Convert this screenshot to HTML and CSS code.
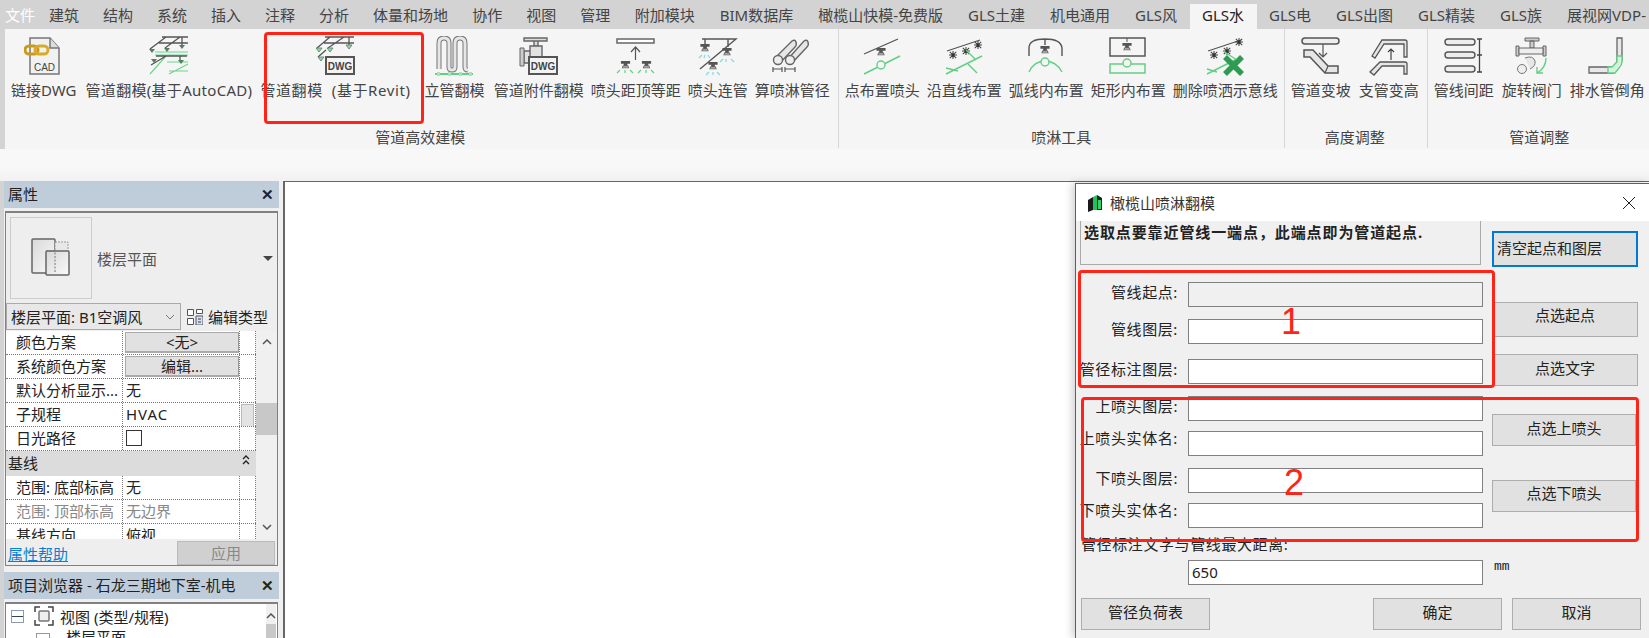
FILE: index.html
```html
<!DOCTYPE html>
<html lang="zh-CN">
<head>
  <meta charset="UTF-8">
  <title>GLS水 - 橄榄山喷淋翻模</title>
  <link rel="stylesheet" href="styles.css">
</head>
<body>
  <svg class="defs" width="0" height="0">
    <symbol id="head" viewBox="0 0 12 12">
      <path d="M1 1h10v3H8v2h1l1 3H2l1-3h1V4H1z" fill="#555"/>
      <path d="M3.500 7h5M3 8.500h6" stroke="#ddd" stroke-width=".7"/>
    </symbol>
    <symbol id="star" viewBox="0 0 10 10">
      <path d="M1 1l8 8M9 1L1 9M5 0v10M0 5h10" stroke="#444" stroke-width="1.300"/>
      <circle cx="5" cy="5" r="1.800" fill="#333"/>
    </symbol>
  </svg>

  <div class="tabs">
    <div class="tab tab-file">文件</div>
    <div class="tab">建筑</div>
    <div class="tab">结构</div>
    <div class="tab">系统</div>
    <div class="tab">插入</div>
    <div class="tab">注释</div>
    <div class="tab">分析</div>
    <div class="tab">体量和场地</div>
    <div class="tab">协作</div>
    <div class="tab">视图</div>
    <div class="tab">管理</div>
    <div class="tab wide">附加模块</div>
    <div class="tab wide">BIM数据库</div>
    <div class="tab wide">橄榄山快模-免费版</div>
    <div class="tab wide">GLS土建</div>
    <div class="tab wide">机电通用</div>
    <div class="tab wide">GLS风</div>
    <div class="tab wide active">GLS水</div>
    <div class="tab wide">GLS电</div>
    <div class="tab wide">GLS出图</div>
    <div class="tab wide">GLS精装</div>
    <div class="tab wide">GLS族</div>
    <div class="tab wide">展视网VDP-</div>
  </div>

  <div class="ribbon">
    <div class="group group-pad">
      <div class="tools">
        <div class="tool tool-first">
          <svg class="icon" viewBox="0 0 40 40">
            <path d="M6 2h20l9 10v26H6z" fill="#f1f1f1" stroke="#777" stroke-width="1.500"/>
            <path d="M26 2v10h9" fill="#ddd" stroke="#777" stroke-width="1.500"/>
            <rect x="1" y="10" width="13" height="8" rx="4" fill="none" stroke="#c99a1c" stroke-width="3"/>
            <rect x="11" y="10" width="13" height="8" rx="4" fill="none" stroke="#d8ab2a" stroke-width="3"/>
            <text x="20.500" y="35" class="icon-text cad">CAD</text>
          </svg>
          <div class="tool-label">链接DWG</div>
        </div>
        <div class="tool">
          <svg class="icon" viewBox="0 0 40 40">
            <path d="M6 16h33M6 19h33M17 20L1 38M39 28L20 38M18 26h21M20 35h19" stroke="#6fd58e" stroke-width="1.200" fill="none"/>
            <path d="M13 1h26M17 1L1 13M31 1L16 12M33 1v8M10 7h29M17 20L2 29M7 20h31M31 20v4" stroke="#555" stroke-width="1.300" fill="none"/>
            <path d="M0 13h6l-3 4zM15 12h6l-3 4zM30 9h6l-3 4zM2 23h6l-3 4zM29 24h6l-3 4z" fill="#557e63"/>
          </svg>
          <div class="tool-label tool-label-cad">管道翻模(基于AutoCAD)</div>
        </div>
        <div class="tool tool-revit">
          <svg class="icon" viewBox="0 0 40 40">
            <path d="M9 1h29M14 1L1 12M28 1L12 12M33 1v8M8 7h30M10 14L2 21" stroke="#555" stroke-width="1.300" fill="none"/>
            <path d="M0 12h6l-3 4zM11 12h6l-3 4zM30 9h6l-3 4zM2 21h6l-3 4z" fill="#9fd5b0" stroke="#557e63" stroke-width=".8"/>
            <rect x="10" y="21" width="28" height="17" fill="#f3f3f3" stroke="#555" stroke-width="2"/>
            <text x="24" y="33.500" class="icon-text dwg">DWG</text>
          </svg>
          <div class="tool-label tool-label-revit">管道翻模&nbsp;&nbsp;(基于Revit)</div>
        </div>
        <div class="tool tool-riser">
          <svg class="icon" viewBox="0 0 40 40">
            <path d="M4 33V7q0-5 5-5t5 5v24q0 3 3 3t3-3V7q0-5 5-5t5 5v24q0 3 3 3" fill="none" stroke="#777" stroke-width="5"/>
            <path d="M4 33V7q0-5 5-5t5 5v24q0 3 3 3t3-3V7q0-5 5-5t5 5v24q0 3 3 3" fill="none" stroke="#e6e6e6" stroke-width="3"/>
            <path d="M0 38h38" stroke="#62cf83" stroke-width="2"/>
            <path d="M2 36h3v4H2zM13 36h3v4h-3zM24 36h3v4h-3zM34 36h3v4h-3z" fill="#a5e4b8"/>
          </svg>
          <div class="tool-label">立管翻模</div>
        </div>
        <div class="tool">
          <svg class="icon" viewBox="0 0 40 40">
            <path d="M5 2h23v3H5zM15 5h4v5h-4z" fill="#ddd" stroke="#666" stroke-width="1.400"/>
            <path d="M11 10h12v14H11zM5 15h6v12H5z" fill="#e2e2e2" stroke="#666" stroke-width="1.400"/>
            <path d="M1 12h4v18H1z" fill="#ccc" stroke="#666"/>
            <rect x="10" y="21" width="28" height="17" fill="#f3f3f3" stroke="#555" stroke-width="2"/>
            <text x="24" y="33.500" class="icon-text dwg">DWG</text>
          </svg>
          <div class="tool-label">管道附件翻模</div>
        </div>
        <div class="tool">
          <svg class="icon" viewBox="0 0 40 40">
            <rect x="1" y="3" width="37" height="4" fill="#fff" stroke="#666" stroke-width="1.500"/>
            <path d="M19.500 24V12M15 16l4.500-5 4.500 5" fill="none" stroke="#555" stroke-width="1.200"/>
            <use href="#head" x="4" y="24" width="11" height="11"/>
            <use href="#head" x="25" y="24" width="11" height="11"/>
            <path d="M1 37l3-3M9 34v3M14 34l3 3M22 37l3-3M30 34v3M35 34l3 3" stroke="#62cf83" stroke-width="1.200"/>
          </svg>
          <div class="tool-label">喷头距顶等距</div>
        </div>
        <div class="tool">
          <svg class="icon" viewBox="0 0 40 40">
            <path d="M4 3h34L2 33M7 3v5M30 3v8" stroke="#555" stroke-width="1.400" fill="none"/>
            <use href="#head" x="1" y="7" width="12" height="11"/>
            <use href="#head" x="23" y="11" width="12" height="11"/>
            <use href="#head" x="9" y="25" width="12" height="11"/>
            <path d="M1 22l3-3M6 22l1-3M10 19l2 3M22 26l3-3M28 26v-3M33 23l3 3M8 39l3-3M15 36v3M19 36l3 3" stroke="#7fd9e8" stroke-width="1.200"/>
          </svg>
          <div class="tool-label">喷头连管</div>
        </div>
        <div class="tool">
          <svg class="icon" viewBox="0 0 40 40">
            <path d="M3 22L20 5q3-2 4 1t-1 5L8 27z" fill="#e6e6e6" stroke="#666" stroke-width="1.400"/>
            <path d="M15 24L32 5q3-2 4 1t-1 5L20 27z" fill="#e6e6e6" stroke="#666" stroke-width="1.400"/>
            <circle cx="6" cy="24" r="4.500" fill="#eee" stroke="#666" stroke-width="1.400"/>
            <circle cx="18" cy="24" r="4.500" fill="#eee" stroke="#666" stroke-width="1.400"/>
            <path d="M1 31v5M1 33h9M10 31v5M13 31v5M13 33h10M23 31v5" stroke="#555" stroke-width="1.200"/>
          </svg>
          <div class="tool-label">算喷淋管径</div>
        </div>
      </div>
      <div class="group-label">管道高效建模</div>
    </div>

    <div class="group">
      <div class="tools">
        <div class="tool">
          <svg class="icon" viewBox="0 0 40 40">
            <path d="M2 18L36 3" stroke="#555" stroke-width="1.300"/>
            <use href="#head" x="13" y="11" width="12" height="11"/>
            <path d="M2 38L38 20" stroke="#62cf83" stroke-width="1.400"/>
            <circle cx="19" cy="29" r="4" fill="#f5f5f5" stroke="#62cf83" stroke-width="1.400"/>
          </svg>
          <div class="tool-label">点布置喷头</div>
        </div>
        <div class="tool">
          <svg class="icon" viewBox="0 0 40 40">
            <path d="M3 15L36 4" stroke="#555" stroke-width="1.300"/>
            <use href="#star" x="5" y="15" width="8" height="8"/>
            <use href="#star" x="18" y="11" width="8" height="8"/>
            <use href="#star" x="30" y="5" width="8" height="8"/>
            <path d="M2 38L38 20M22 14L32 24M2 32l12 3" stroke="#62cf83" stroke-width="1.400" fill="none"/>
            <path d="M24 28L33 37" stroke="#62cf83" stroke-width="1.400"/>
          </svg>
          <div class="tool-label">沿直线布置</div>
        </div>
        <div class="tool">
          <svg class="icon" viewBox="0 0 40 40">
            <path d="M3 20V12Q3 3 19 3t17 9v8M19 3v6" fill="none" stroke="#555" stroke-width="1.400"/>
            <use href="#head" x="13" y="9" width="12" height="11"/>
            <path d="M3 36q5-11 16-11t17 11" fill="none" stroke="#62cf83" stroke-width="1.400"/>
            <circle cx="19" cy="26" r="4" fill="#f5f5f5" stroke="#62cf83" stroke-width="1.400"/>
          </svg>
          <div class="tool-label">弧线内布置</div>
        </div>
        <div class="tool">
          <svg class="icon" viewBox="0 0 40 40">
            <rect x="2" y="2" width="35" height="18" fill="none" stroke="#555" stroke-width="1.500"/>
            <path d="M19 2v4" stroke="#555"/>
            <use href="#head" x="13" y="6" width="12" height="11"/>
            <rect x="2" y="28" width="35" height="9" fill="none" stroke="#62cf83" stroke-width="1.500"/>
            <circle cx="19" cy="27" r="4" fill="#f5f5f5" stroke="#62cf83" stroke-width="1.400"/>
          </svg>
          <div class="tool-label">矩形内布置</div>
        </div>
        <div class="tool">
          <svg class="icon" viewBox="0 0 40 40">
            <path d="M3 15L36 4" stroke="#555" stroke-width="1.300"/>
            <use href="#star" x="5" y="15" width="8" height="8"/>
            <use href="#star" x="18" y="11" width="8" height="8"/>
            <use href="#star" x="30" y="2" width="8" height="8"/>
            <path d="M2 38L30 24M18 15l14 9M2 33l10 3" stroke="#62cf83" stroke-width="1.400" fill="none"/>
            <path d="M20 21L37 38M37 21L20 38" stroke="#2f9a52" stroke-width="5.500"/>
          </svg>
          <div class="tool-label">删除喷洒示意线</div>
        </div>
      </div>
      <div class="group-label">喷淋工具</div>
    </div>

    <div class="group group-pad">
      <div class="tools tools-loose">
        <div class="tool">
          <svg class="icon" viewBox="0 0 40 40">
            <rect x="1" y="2" width="37" height="6" rx="3" fill="#eee" stroke="#555" stroke-width="1.500"/>
            <path d="M22 8v13M18 17l4 4 4-4" fill="none" stroke="#555" stroke-width="1.200"/>
            <path d="M3 17h9l15 16h10v7H24L9 24H3z" fill="#e6e6e6" stroke="#555" stroke-width="1.500" transform="translate(0 -3)"/>
            <path d="M24 37l3-7" stroke="#555" stroke-width="1.200"/>
          </svg>
          <div class="tool-label">管道变坡</div>
        </div>
        <div class="tool">
          <svg class="icon" viewBox="0 0 40 40">
            <path d="M3 20L13 4h23q2 0 2 2v15h-3V8H15L6 22z" fill="#e6e6e6" stroke="#555" stroke-width="1.300"/>
            <path d="M1 36L11 26h25q2 0 2 2v10h-3v-8H13L5 39z" fill="#e6e6e6" stroke="#555" stroke-width="1.300"/>
            <path d="M22 24V13M19 16l3-3 3 3" fill="none" stroke="#444" stroke-width="1.200"/>
          </svg>
          <div class="tool-label">支管变高</div>
        </div>
      </div>
      <div class="group-label">高度调整</div>
    </div>

    <div class="group group-last">
      <div class="tools tools-loose">
        <div class="tool">
          <svg class="icon" viewBox="0 0 40 40">
            <rect x="1" y="3" width="30" height="6" rx="3" fill="#eee" stroke="#555" stroke-width="1.400"/>
            <rect x="1" y="16" width="30" height="6" rx="3" fill="#eee" stroke="#555" stroke-width="1.400"/>
            <rect x="1" y="30" width="30" height="6" rx="3" fill="#eee" stroke="#555" stroke-width="1.400"/>
            <path d="M33 3h5M35.500 3v33M33 36h5M33 19h5" stroke="#444" stroke-width="1.300"/>
          </svg>
          <div class="tool-label">管线间距</div>
        </div>
        <div class="tool">
          <svg class="icon" viewBox="0 0 40 40">
            <path d="M13 2h14v3H13zM18 5h4v7h-4zM4 10h3v10H4zM31 10h3v10h-3z" fill="#ccc" stroke="#666"/>
            <path d="M7 12h24v6H7z" fill="#eee" stroke="#666"/>
            <path d="M13 22q8-3 10 3 1 5-5 8" fill="#e6e6e6" stroke="#777"/>
            <circle cx="10" cy="33" r="4.500" fill="#eee" stroke="#777"/>
            <path d="M34 22q0 10-9 15M25 31v6h6" fill="none" stroke="#62cf83" stroke-width="1.400"/>
          </svg>
          <div class="tool-label">旋转阀门</div>
        </div>
        <div class="tool">
          <svg class="icon" viewBox="0 0 40 40">
            <path d="M30 2h5v22q0 4-3 7l-5 6H2v-6h24l4-5z" fill="#e8e8e8" stroke="#666" stroke-width="1.300"/>
            <path d="M30 20h5v6q0 3-3 6l-4 5h-7v-6h4l5-5z" fill="#d6f2de" stroke="#62cf83" stroke-width="1.300"/>
          </svg>
          <div class="tool-label">排水管倒角</div>
        </div>
      </div>
      <div class="group-label">管道调整</div>
    </div>
  </div>

  <div class="ribbon-gap"></div>

  <div class="workspace">
    <div class="dock">
      <div class="panel-head"><span>属性</span><span class="close">✕</span></div>
      <div class="props">
        <div class="preview">
          <div class="preview-box">
            <svg width="42" height="42" viewBox="0 0 42 42">
              <defs>
                <linearGradient id="sheet" x1="0" y1="0" x2="1" y2="1">
                  <stop offset="0" stop-color="#d8d8d8"/>
                  <stop offset="1" stop-color="#fafafa"/>
                </linearGradient>
              </defs>
              <rect x="2" y="2" width="23" height="34" rx="1" fill="url(#sheet)" stroke="#666" stroke-width="1.500"/>
              <rect x="25" y="5" width="13" height="12" fill="#e8e8e8" stroke="#999" stroke-dasharray="2 1"/>
              <rect x="16" y="14" width="23" height="24" rx="1" fill="url(#sheet)" stroke="#666" stroke-width="1.500"/>
              <path d="M16 14h9V36" fill="none" stroke="#777" stroke-dasharray="2 1.500"/>
            </svg>
          </div>
          <div class="preview-name">楼层平面</div>
          <div class="caret"></div>
        </div>
        <div class="selector-row">
          <div class="selector">
            <span>楼层平面: B1空调风</span>
            <svg width="10" height="6" viewBox="0 0 10 6"><path d="M1 1l4 4 4-4" fill="none" stroke="#777"/></svg>
          </div>
          <div class="edit-type">
            <svg width="16" height="16" viewBox="0 0 16 16">
              <path d="M.5.5h6v6h-6zM9.500.5h6v4h-6zM.5 9.500h6v6h-6z" fill="#fff" stroke="#555"/>
              <path d="M9 7h7v9H9z" fill="#d7e3ee" stroke="#555"/>
              <path d="M11 10h3M11 13h3" stroke="#336"/>
            </svg>
            <span>编辑类型</span>
          </div>
        </div>
        <div class="prop-body">
          <div class="prop-table">
            <div class="row"><div class="cell name">颜色方案</div><div class="cell value"><div class="cell-btn">&lt;无&gt;</div></div><div class="cell extra"></div></div>
            <div class="row"><div class="cell name">系统颜色方案</div><div class="cell value"><div class="cell-btn">编辑...</div></div><div class="cell extra"></div></div>
            <div class="row"><div class="cell name">默认分析显示...</div><div class="cell value">无</div><div class="cell extra"></div></div>
            <div class="row"><div class="cell name">子规程</div><div class="cell value hvac">HVAC</div><div class="cell extra"><div class="spin"></div></div></div>
            <div class="row"><div class="cell name">日光路径</div><div class="cell value"><div class="check"></div></div><div class="cell extra"></div></div>
            <div class="section">
              <span>基线</span>
              <svg class="fold" width="10" height="10" viewBox="0 0 10 10"><path d="M2 4l3-3 3 3M2 9l3-3 3 3" fill="none" stroke="#222" stroke-width="1.300"/></svg>
            </div>
            <div class="row"><div class="cell name">范围: 底部标高</div><div class="cell value">无</div><div class="cell extra"></div></div>
            <div class="row muted"><div class="cell name">范围: 顶部标高</div><div class="cell value">无边界</div><div class="cell extra"></div></div>
            <div class="row"><div class="cell name">基线方向</div><div class="cell value">俯视</div><div class="cell extra"></div></div>
          </div>
          <div class="scrollbar">
            <svg width="10" height="6" viewBox="0 0 10 6"><path d="M1 5l4-4 4 4" fill="none" stroke="#555" stroke-width="1.500"/></svg>
            <div class="thumb"></div>
            <svg width="10" height="6" viewBox="0 0 10 6"><path d="M1 1l4 4 4-4" fill="none" stroke="#555" stroke-width="1.500"/></svg>
          </div>
        </div>
        <div class="prop-foot">
          <a class="help" href="#">属性帮助</a>
          <div class="apply">应用</div>
        </div>
      </div>

      <div class="panel-head head-browser"><span>项目浏览器 - 石龙三期地下室-机电</span><span class="close">✕</span></div>
      <div class="browser">
        <div class="tree">
          <div class="tree-row">
            <div class="minus"></div>
            <svg width="20" height="20" viewBox="0 0 20 20">
              <path d="M1 6V1h5M14 1h5v5M19 14v5h-5M6 19H1v-5" fill="none" stroke="#444" stroke-width="1.500"/>
              <rect x="5" y="5" width="10" height="10" rx="1" fill="#eee" stroke="#777" stroke-width="1.500"/>
            </svg>
            <span>视图 (类型/规程)</span>
          </div>
          <div class="tree-row tree-child">
            <div class="leaf"></div>
            <span>楼层平面</span>
          </div>
        </div>
        <div class="browser-scroll">
          <svg width="10" height="6" viewBox="0 0 10 6"><path d="M1 5l4-4 4 4" fill="none" stroke="#555" stroke-width="1.500"/></svg>
          <div class="browser-thumb"></div>
        </div>
      </div>
    </div>
    <div class="canvas"></div>
  </div>

  <div class="dialog">
    <div class="dialog-title">
      <svg width="16" height="18" viewBox="0 0 16 18">
        <path d="M1 6l5-3v13l-5 2z" fill="#1a1a1a"/>
        <path d="M6 3l4-2v15H6z" fill="#1fc45a"/>
        <path d="M10 1l5 3v12h-5z" fill="#123"/>
        <path d="M11 6h3v9h-3z" fill="#2bd46a"/>
      </svg>
      <span class="dialog-name">橄榄山喷淋翻模</span>
      <svg class="dialog-close" width="12" height="12" viewBox="0 0 12 12"><path d="M0 0l12 12M12 0L0 12" stroke="#222"/></svg>
    </div>
    <div class="dialog-body">
      <div class="dialog-main">
        <div class="dialog-left">
          <div class="note">选取点要靠近管线一端点，此端点即为管道起点.</div>
          <div class="field first"><label>管线起点:</label><div class="input disabled"></div></div>
          <div class="field gap-m"><label>管线图层:</label><div class="input"></div></div>
          <div class="field gap-l"><label>管径标注图层:</label><div class="input"></div></div>
          <div class="field gap-m"><label>上喷头图层:</label><div class="input"></div></div>
          <div class="field gap-s"><label class="up">上喷头实体名:</label><div class="input"></div></div>
          <div class="field gap-m"><label>下喷头图层:</label><div class="input"></div></div>
          <div class="field gap-s"><label class="up">下喷头实体名:</label><div class="input"></div></div>
          <div class="dist-label">管径标注文字与管线最大距离:</div>
          <div class="field"><label></label><div class="input">650</div></div>
        </div>
        <div class="dialog-right">
          <div class="btn btn-focus">清空起点和图层</div>
          <div class="btn btn-start">点选起点</div>
          <div class="btn btn-text">点选文字</div>
          <div class="btn btn-up">点选上喷头</div>
          <div class="btn btn-down">点选下喷头</div>
          <div class="unit">mm</div>
        </div>
      </div>
      <div class="dialog-foot">
        <div class="btn foot-btn">管径负荷表</div>
        <div class="btn foot-btn ok">确定</div>
        <div class="btn foot-btn">取消</div>
      </div>
    </div>
  </div>

  <!-- 红色标注 -->
  <div class="mark mark-revit"></div>
  <div class="mark mark-one"></div>
  <div class="mark mark-two"></div>
  <div class="mark-num num-one">1</div>
  <div class="mark-num num-two">2</div>
</body>
</html>
```

FILE: styles.css
```css
html, body {
  margin: 0;
  height: 638px;
  overflow: hidden;
}
body {
  position: relative;
  font-family: "Noto Sans", "Noto Sans CJK SC", sans-serif;
  font-size: 15px;
  color: #333;
  background: #f0f0f0;
}
.defs {
  position: absolute;
}

/* tabs */
.tabs {
  display: flex;
  height: 29px;
  background: #d3d3d3;
  padding-left: 5px;
  white-space: nowrap;
  overflow: hidden;
}
.tab {
  padding: 4px 12px 0;
  line-height: 22px;
  color: #444;
}
.tab.wide {
  padding-left: 12.5px;
  padding-right: 12.5px;
}
.tab-file {
  padding: 4px 2px 0 0;
  color: #fff;
}
.tab.active {
  margin-top: 4px;
  padding-top: 0;
  background: #f5f5f5;
  color: #222;
}

/* ribbon */
.ribbon {
  display: flex;
  height: 120px;
  border-left: 5px solid #d3d3d3;
  background: #f5f5f5;
}
.group {
  display: flex;
  flex-direction: column;
  padding: 0 6px 0 6px;
  margin-bottom: 1px;
  border-right: 1px solid #d6d6d6;
}
.group-pad {
  padding-right: 8px;
}
.group-last {
  flex: 1;
  border-right: 0;
}
.tools {
  display: flex;
  gap: 7px;
  padding-top: 7px;
  height: 98px;
  box-sizing: border-box;
}
.tools-loose {
  gap: 8px;
}
.tool {
  display: flex;
  flex-direction: column;
  align-items: center;
  white-space: nowrap;
  color: #444;
}
.tool-first {
  margin-right: 2px;
}
.tool-label-cad {
  letter-spacing: .3px;
}
.tool-label-revit {
  letter-spacing: .6px;
}
.tool-revit {
  margin: 0 7px 0 1px;
}
.tool-riser {
  margin-right: 2px;
}
.icon {
  display: block;
  width: 40px;
  height: 40px;
}
.tool-label {
  margin-top: 4px;
  line-height: 20px;
}
.group-label {
  text-align: center;
  line-height: 20px;
  color: #444;
}
.icon-text {
  font-family: "Liberation Sans", sans-serif;
  text-anchor: middle;
  fill: #444;
}
.icon-text.cad {
  font-size: 10px;
}
.icon-text.dwg {
  font-size: 10px;
  font-weight: bold;
}
.ribbon-gap {
  height: 32px;
  background: linear-gradient(#f8f8f8 60%, #f1f1f1);
}

/* work area */
.workspace {
  display: flex;
  height: 457px;
  border-left: 4px solid #d3d3d3;
  background: #f0f0f0;
}
.dock {
  width: 275px;
  flex: none;
}
.panel-head {
  display: flex;
  justify-content: space-between;
  align-items: center;
  height: 27px;
  padding: 0 5px 0 4px;
  background: #bfcddb;
  color: #222;
  line-height: 27px;
}
.close {
  font-size: 15px;
  font-weight: bold;
  width: 13px;
  color: #222;
}
.props {
  margin: 3px 1px 0;
  border: 1px solid #808080;
  border-top-width: 2px;
  height: 355px;
  box-sizing: border-box;
  background: #eee;
  color: #222;
}
.preview {
  display: flex;
  align-items: center;
  padding: 3px 4px 0 4px;
  height: 87px;
  box-sizing: border-box;
}
.preview-box {
  display: flex;
  align-items: center;
  justify-content: center;
  width: 80px;
  height: 80px;
  border: 1px solid #ccc;
}
.preview-name {
  flex: 1;
  margin-left: 5px;
  color: #555;
}
.caret {
  width: 0;
  height: 0;
  border: 5px solid transparent;
  border-top-color: #444;
  border-bottom-width: 0;
}
.selector-row {
  display: flex;
  align-items: center;
  margin-top: 3px;
  padding-right: 2px;
}
.selector {
  display: flex;
  align-items: center;
  justify-content: space-between;
  width: 175px;
  height: 27px;
  padding: 0 5px 0 4px;
  box-sizing: border-box;
  border: 1px solid #aaa;
  background: #e8e8e8;
}
.edit-type {
  display: flex;
  align-items: center;
  gap: 5px;
  margin-left: 6px;
}
.prop-body {
  display: flex;
  height: 208px;
  margin-top: 1px;
  overflow: hidden;
}
.prop-table {
  width: 250px;
  flex: none;
  background: #fff;
}
.row {
  display: grid;
  grid-template-columns: 117px 117px 16px;
  height: 24px;
  box-sizing: border-box;
  border-bottom: 1px dotted #777;
  line-height: 23px;
}
.cell {
  border-right: 1px dotted #777;
  white-space: nowrap;
  overflow: hidden;
}
.cell.name {
  padding-left: 10px;
}
.cell.value {
  padding-left: 3px;
}
.cell.hvac {
  letter-spacing: 1px;
}
.cell-btn {
  margin: 1px 0 0 -1px;
  height: 21px;
  box-sizing: border-box;
  border: 1px solid #aaa;
  border-right-color: #999;
  border-bottom-width: 2px;
  background: #e1e1e1;
  text-align: center;
  line-height: 18px;
}
.spin {
  margin: 1px;
  height: 21px;
  background: #e3e3e3;
  border: 1px solid #bbb;
}
.check {
  width: 14px;
  height: 14px;
  margin-top: 3px;
  border: 1px solid #333;
  background: #fff;
}
.section {
  display: flex;
  justify-content: space-between;
  height: 25px;
  padding: 0 5px 0 2px;
  background: #dcdcdc;
  line-height: 25px;
}
.fold {
  margin-top: 4px;
}
.muted {
  color: #888;
}
.scrollbar {
  display: flex;
  flex-direction: column;
  align-items: center;
  position: relative;
  flex: 1;
  background: #f0f0f0;
  padding-top: 8px;
}
.thumb {
  position: absolute;
  left: 0;
  right: 0;
  top: 72px;
  height: 32px;
  background: #c8c8c8;
}
.scrollbar svg:last-child {
  margin-top: auto;
  margin-bottom: 9px;
}
.prop-foot {
  display: flex;
  justify-content: space-between;
  align-items: center;
  padding: 2px 2px 0 2px;
}
.help {
  color: #0a7fd0;
}
.apply {
  width: 98px;
  height: 24px;
  box-sizing: border-box;
  border: 1px solid #bbb;
  background: #d0d0d0;
  color: #888;
  text-align: center;
  line-height: 22px;
}
.head-browser {
  margin-top: 6px;
}
.browser {
  display: flex;
  margin: 3px 1px 0;
  height: 40px;
  border: 1px solid #808080;
  border-top-width: 2px;
  border-bottom: 0;
  background: #fff;
  color: #222;
  overflow: hidden;
}
.tree {
  flex: 1;
  padding: 2px 0 0 5px;
}
.tree-row {
  display: flex;
  align-items: center;
  height: 20px;
}
.tree-row svg {
  margin: 0 6px 0 10px;
}
.minus {
  width: 11px;
  height: 11px;
  border: 1px solid #8a9ab0;
  background: linear-gradient(#fff 45%, #345 45%, #345 55%, #fff 55%);
}
.leaf {
  width: 12px;
  height: 10px;
  margin: 6px 16px 0 25px;
  border: 1px solid #999;
}
.browser-scroll {
  display: flex;
  flex-direction: column;
  align-items: center;
  width: 10px;
  margin-right: 1px;
  padding-top: 9px;
  background: #f0f0f0;
}
.browser-thumb {
  width: 100%;
  flex: 1;
  margin-top: 5px;
  background: #c8c8c8;
}
.canvas {
  flex: 1;
  margin-left: 4px;
  border-left: 2px solid #666;
  border-top: 1px solid #666;
  background: #fff;
}

/* dialog */
.dialog {
  position: absolute;
  left: 1075px;
  top: 183px;
  width: 574px;
  height: 455px;
  box-sizing: border-box;
  border: 1px solid #0078d7;
  border-right: 0;
  border-bottom: 0;
  background: #f0f0f0;
  box-shadow: -3px 0 8px rgba(0,0,0,0.18);
  color: #222;
}
.dialog-title {
  display: flex;
  align-items: center;
  height: 37px;
  padding: 0 14px 0 11px;
  background: #fff;
}
.dialog-name {
  flex: 1;
  margin-left: 7px;
  color: #333;
}
.dialog-body {
  padding: 0 8px 0 4px;
}
.dialog-main {
  display: flex;
  height: 377px;
}
.dialog-left {
  width: 403px;
  flex: none;
}
.note {
  height: 44px;
  width: 401px;
  box-sizing: border-box;
  padding: 1px 0 0 3px;
  border: 1px solid #aaa;
  border-top: 0;
  font-weight: bold;
  letter-spacing: .9px;
  line-height: 20px;
  white-space: nowrap;
  overflow: hidden;
}
.field {
  display: flex;
  align-items: center;
  height: 25px;
}
.field label {
  display: flex;
  justify-content: flex-end;
  width: 98px;
  padding: 0 10px 6px 0;
  flex: none;
  letter-spacing: .6px;
  white-space: nowrap;
}
.field label.up {
  padding-bottom: 12px;
}
.field.first {
  margin-top: 17px;
}
.gap-s {
  margin-top: 10px;
}
.gap-m {
  margin-top: 12px;
}
.gap-l {
  margin-top: 15px;
}
.input {
  flex: 1;
  height: 25px;
  box-sizing: border-box;
  padding-left: 3px;
  border: 1px solid #808080;
  background: #fff;
  line-height: 23px;
}
.input.disabled {
  background: #f0f0f0;
}
.dist-label {
  margin-top: 6px;
  height: 26px;
  padding-left: 1px;
  letter-spacing: .6px;
  line-height: 20px;
  white-space: nowrap;
}
.dialog-right {
  margin-left: 9px;
  width: 146px;
  flex: none;
}
.btn {
  display: flex;
  align-items: center;
  justify-content: center;
  box-sizing: border-box;
  border: 1px solid #adadad;
  background: #e1e1e1;
  padding-bottom: 6px;
}
.btn-focus {
  justify-content: flex-start;
  margin-top: 10px;
  height: 36px;
  padding: 0 0 3px 3px;
  border: 2px solid #0078d7;
}
.btn-start {
  margin-top: 35px;
  height: 35px;
  padding-bottom: 10px;
}
.btn-text {
  margin-top: 17px;
  height: 32px;
}
.btn-up {
  margin-top: 28px;
  height: 32px;
  width: 144px;
}
.btn-down {
  margin-top: 34px;
  height: 32px;
  width: 144px;
  padding-bottom: 8px;
}
.unit {
  margin: 47px 0 0 2px;
  font-family: "Liberation Mono", monospace;
  font-size: 13px;
  line-height: 16px;
}
.dialog-foot {
  display: flex;
  gap: 10px;
  padding-left: 1px;
}
.foot-btn {
  width: 129px;
  height: 32px;
}
.foot-btn.ok {
  margin-left: auto;
}

/* annotations */
.mark {
  position: absolute;
  box-sizing: border-box;
  border: 3px solid #ff2318;
  border-radius: 4px;
}
.mark-revit {
  left: 264px;
  top: 32px;
  width: 160px;
  height: 92px;
}
.mark-one {
  left: 1078px;
  top: 270px;
  width: 417px;
  height: 118px;
}
.mark-two {
  left: 1081px;
  top: 397px;
  width: 558px;
  height: 145px;
}
.mark-num {
  position: absolute;
  font-family: "Liberation Sans", sans-serif;
  font-size: 36px;
  line-height: 36px;
  color: #ff2318;
}
.num-one {
  left: 1281px;
  top: 304px;
}
.num-two {
  left: 1284px;
  top: 465px;
}
```
